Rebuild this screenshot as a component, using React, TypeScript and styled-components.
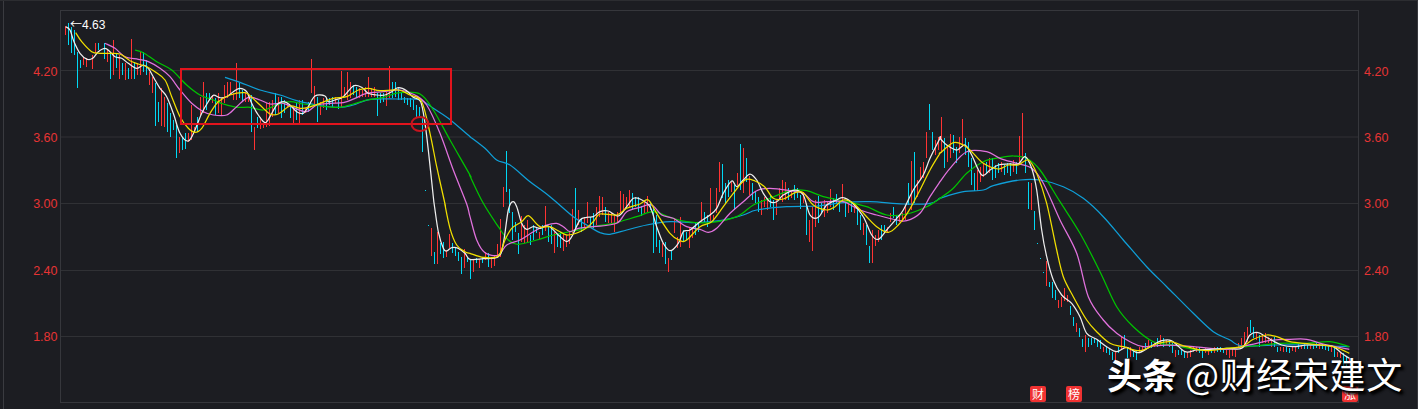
import React from "react";
import styled, { createGlobalStyle } from "styled-components";

// traces read off the chart, in 3x crop coordinates: [crop left, crop top, points]
type Panel = [number, number, string];

const WHITE: Panel[] = [
  [0, 0, "197,80 210,90 222,125 240,160 262,178 278,175 295,155 315,145 330,155 345,170 365,175 385,190 410,205 430,195 445,205 465,240 480,265 500,290 520,340 540,400 565,423 585,390 605,340 625,305 640,286 660,293 680,290 700,275 720,265 740,275 755,310 775,345 795,368 810,350 830,315 850,305 870,315 890,335 910,340 925,320 945,288 975,288 985,305 1005,300 1030,290 1060,258 1085,262 1105,280 1130,285 1155,285 1175,275 1195,263 1220,272 1240,292 1262,305 1275,370 1285,450 1300,590"],
  [0, 205, "1303,0 1315,80 1330,130 1340,138 1355,128 1375,130 1395,145"],
  [470, 100, "0,478 40,476 85,470 100,430 115,330 128,305 140,320 155,370 170,388 190,380 210,385 235,378 265,405 290,425 305,410 330,360 350,352 370,350 390,335 415,333 445,348 470,320 490,295 510,297 540,320 560,380 580,430 600,452 625,430 640,395 660,390 690,365 720,345 740,325 760,280 785,243 800,260 820,240 840,222 860,240 880,280 900,305 920,305 940,285 975,270 1000,285 1020,345 1045,352 1070,315 1100,300 1120,293 1150,312 1180,350 1205,405 1225,418 1250,390 1280,355 1300,330 1330,270 1360,225 1380,175 1410,115"],
  [940, 90, "0,145 20,165 50,180 75,165 95,195 125,255 150,240 175,225 205,222 235,222 255,200 275,235 290,300 305,420 320,500 340,570 365,615 395,640 420,680 440,730 470,748 500,770 530,785 560,772 595,788 630,770 665,752 695,752 735,785 770,780 810,778 860,775 905,775 930,735 955,728 985,745 1025,765 1060,770 1100,765 1140,765 1180,770 1205,790 1228,805"],
];

const YELLOW: Panel[] = [
  [0, 0, "227,98 245,125 275,155 300,160 330,160 360,162 390,182 415,192 440,200 465,215 495,240 515,290 540,350 565,385 585,397 605,385 630,340 655,305 690,285 735,278 755,292 780,315 810,342 835,342 870,318 900,325 925,322 960,310 1000,295 1040,290 1075,270 1105,265 1140,272 1195,270 1230,285 1265,305 1290,400 1310,500 1335,612"],
  [0, 205, "1335,0 1350,70 1370,120 1395,140"],
  [470, 100, "0,460 40,472 85,468 105,420 125,385 155,365 175,347 200,372 215,382 240,380 270,395 295,405 340,390 370,365 390,342 440,345 470,325 510,312 535,300 560,340 600,400 630,422 650,420 690,380 725,365 760,320 790,280 825,240 855,243 885,262 910,295 940,297 975,278 1000,278 1030,315 1070,330 1095,320 1120,300 1150,310 1185,345 1220,380 1255,397 1285,375 1315,335 1345,280 1380,210 1410,160"],
  [940, 90, "0,190 40,158 70,165 95,185 130,220 175,237 205,225 235,225 265,210 290,250 320,340 350,480 370,560 400,620 440,690 470,725 510,760 550,770 600,782 650,762 690,755 740,770 800,782 860,775 905,770 940,748 980,735 1010,740 1050,755 1110,762 1180,770 1228,790"],
];

const PINK: Panel[] = [
  [0, 0, "315,130 345,145 375,170 415,178 445,185 480,205 510,230 540,270 575,310 610,335 640,345 680,345 710,320 745,292 780,300 810,312 850,310 885,325 920,335 950,315 990,310 1030,308 1065,295 1100,280 1150,275 1200,270 1245,285 1280,315 1320,400 1360,510 1400,612"],
  [470, 100, "0,350 20,420 45,458 85,465 110,435 150,420 190,395 230,375 260,370 280,380 300,395 325,385 370,380 440,370 470,335 510,322 545,315 575,345 610,355 650,380 690,388 715,397 740,385 780,340 820,305 860,272 900,265 960,272 1000,280 1030,305 1070,305 1120,305 1170,330 1220,345 1280,360 1310,362 1350,340 1380,290 1410,245"],
  [940, 90, "0,275 30,235 80,185 140,185 180,205 230,220 275,235 310,280 360,390 410,490 445,620 490,690 530,730 570,755 610,770 680,765 760,770 860,778 905,770 950,760 1000,750 1050,748 1100,748 1150,762 1228,778"],
];

const GREEN: Panel[] = [
  [0, 0, "405,150 430,158 470,185 515,210 560,255 600,285 640,300 670,312 710,322 750,322 790,330 830,315 870,305 910,312 960,318 1020,322 1060,312 1100,300 1150,292 1200,278 1260,282 1300,330 1350,420 1410,525"],
  [470, 100, "0,228 40,310 85,380 115,420 145,433 200,420 250,405 300,395 380,378 430,370 500,350 550,335 600,352 650,365 720,368 800,350 850,315 900,295 960,272 1010,272 1060,290 1130,305 1190,320 1250,345 1310,342 1370,320 1410,295"],
  [940, 90, "0,325 40,295 80,250 130,215 180,203 220,198 260,205 300,240 360,335 420,430 480,545 530,650 580,710 640,755 700,765 780,780 860,775 940,768 1020,760 1100,760 1170,755 1228,770"],
];

const BLUE: Panel[] = [
  [0, 0, "675,232 720,247 780,270 840,285 890,302 950,315 1020,322 1060,315 1110,298 1190,297 1260,300 1300,325 1345,355 1410,410"],
  [470, 100, "0,110 45,145 80,180 120,195 180,245 240,290 310,350 350,375 390,398 420,403 470,390 530,375 600,365 680,368 750,362 820,345 860,330 950,320 1040,318 1120,308 1200,305 1300,312 1380,310 1410,295"],
  [940, 90, "0,325 60,307 130,300 160,287 240,270 300,270 370,290 430,325 490,380 550,450 620,530 680,590 760,670 820,725 870,750 905,768 1000,765 1100,765 1228,770"],
];

// candles: x,top,bottom,colour (r red, c cyan)
const CANDLES: Panel[] = [
  [0, 0, "195,78,105,r 205,70,135,c 214,80,160,c 223,90,165,c 232,155,263,c 241,180,205,c 250,170,195,r 259,175,200,r 277,165,207,r 286,130,160,r 295,128,150,c 313,130,177,c 322,150,185,r 331,155,237,c 340,120,225,r 349,160,205,c 358,165,237,r 367,190,225,c 376,190,240,r 385,205,237,c 394,118,237,r 403,185,238,c 412,190,225,r 421,155,225,r 430,155,215,c 439,180,225,c 448,215,255,r 457,230,280,r 466,250,378,c 475,305,365,c 484,265,378,r 493,290,380,r 502,310,395,c 511,340,410,c 520,360,390,c 529,375,473,c 538,410,458,r 547,410,450,c 556,400,448,c 565,400,425,r 574,315,420,r 583,380,400,r 592,350,395,c 601,290,345,r 610,245,340,r 619,280,330,c 628,280,300,c 637,285,310,r 646,295,345,c 655,280,340,r 664,295,345,r 673,255,310,r 682,245,295,r 691,245,285,r 700,280,300,r 709,190,300,r 718,250,295,c 727,270,305,c 736,280,305,r 745,285,305,r 754,285,397,c 763,380,450,r 772,350,385,c 781,350,387,r 790,370,385,r 799,310,380,r 808,305,378,r 817,300,350,r 826,280,345,c 835,290,340,r 844,290,355,c 853,300,340,c 862,310,325,r 871,320,355,c 880,325,370,r 889,310,360,c 898,300,370,r 907,300,345,c 916,325,340,r 925,305,335,c 934,178,280,r 943,258,315,r 952,290,365,c 961,305,345,r 970,295,325,r 979,295,330,c 988,295,315,c 997,290,320,c 1006,290,310,r 1015,300,328,c 1024,213,320,r 1033,262,285,r 1042,215,300,r 1051,245,295,r 1060,255,285,c 1069,260,295,c 1078,265,295,r 1087,270,290,r 1096,262,290,r 1105,232,290,r 1114,265,290,r 1123,262,290,r 1132,280,348,c 1141,280,310,c 1150,280,305,c 1159,275,317,r 1168,198,295,r 1177,245,295,c 1186,245,290,c 1195,265,300,c 1204,280,300,c 1213,290,310,c 1222,295,315,c 1231,295,320,c 1240,300,330,c 1249,315,350,c 1258,320,350,c 1267,352,455,c 1276,570,573,c"],
  [0, 205, "1285,60,63,c 1294,70,153,r 1303,140,177,c 1312,80,177,r 1321,115,147,c 1330,112,158,c 1339,135,155,r 1348,88,130,r 1357,115,143,c 1366,125,153,c 1375,140,167,c 1384,155,207,c 1393,132,188,r 1402,155,170,c"],
  [470, 100, "1,478,537,c 10,478,515,r 19,475,490,c 28,478,505,r 37,470,490,c 46,455,480,r 55,460,500,c 64,470,503,r 73,465,498,r 82,432,475,r 91,358,470,r 100,262,320,r 109,153,275,c 118,267,340,c 127,335,420,c 136,365,395,c 145,400,462,c 154,347,425,r 163,375,430,r 172,360,430,r 181,405,435,c 190,375,420,c 199,380,400,c 208,395,418,r 217,375,405,c 226,318,392,r 235,380,425,c 244,375,432,c 253,395,458,r 262,405,440,c 271,395,445,c 280,400,452,r 289,405,440,r 298,395,432,r 307,328,400,r 316,265,385,c 325,330,375,r 334,355,395,c 343,350,385,r 352,305,370,r 361,350,385,c 370,340,385,c 379,320,375,r 388,287,350,r 397,290,345,r 406,320,365,c 415,335,370,r 424,340,375,r 433,345,395,r 442,335,370,r 451,272,340,r 460,282,335,r 469,290,325,r 478,270,322,r 487,278,330,c 496,290,320,c 505,290,335,c 514,318,348,c 523,300,340,r 532,288,335,r 541,308,330,c 550,325,458,c 559,345,440,c 568,420,460,c 577,430,472,r 586,425,493,c 595,475,515,r 604,450,480,c 613,355,400,r 622,410,445,r 631,350,440,r 640,390,425,c 649,395,420,c 658,380,445,r 667,385,415,r 676,365,405,c 685,365,395,c 694,305,370,r 703,335,365,c 712,345,380,c 721,265,370,r 730,345,365,r 739,265,340,r 748,185,275,r 757,193,295,c 766,250,310,c 775,240,290,c 784,245,275,r 793,255,330,c 802,218,255,r 811,132,270,c 820,143,278,r 829,175,245,c 838,228,285,r 847,250,300,c 856,275,310,c 865,290,335,c 874,300,345,r 883,290,320,r 892,295,330,r 901,285,320,c 910,300,360,c 919,300,345,r 928,265,295,r 937,240,305,r 946,245,300,r 955,265,300,c 964,270,295,r 973,255,300,c 982,265,295,c 991,285,327,c 1000,275,310,r 1009,320,405,c 1018,360,425,r 1027,320,453,r 1036,300,380,r 1045,288,370,c 1054,310,340,c 1063,300,350,r 1072,305,340,r 1081,268,320,r 1090,295,330,c 1099,283,310,c 1108,310,335,c 1117,252,305,r 1126,305,350,c 1135,310,340,r 1144,310,335,c 1153,315,340,r 1162,320,375,c 1171,345,390,c 1180,370,405,r 1189,375,435,c 1198,437,488,c 1207,390,488,r 1216,405,437,r 1225,390,425,r 1234,375,420,c 1243,375,400,c 1252,380,395,r 1261,340,365,r 1270,320,355,c 1279,345,375,c 1288,345,365,r 1297,340,365,r 1306,318,360,r 1315,248,315,c 1324,183,330,r 1333,157,310,c 1342,240,290,r 1351,200,240,r 1360,185,235,r 1369,95,175,r 1378,12,90,c 1387,97,150,c 1396,120,165,r 1405,110,150,r"],
  [940, 90, "4,82,190,r 13,145,235,c 22,165,215,r 31,132,205,r 40,135,190,c 49,170,218,c 58,140,190,r 67,88,170,r 76,145,195,c 85,155,230,c 94,205,285,c 103,250,303,c 112,240,302,r 121,230,275,r 130,220,260,r 139,215,250,c 148,205,250,r 157,205,270,c 166,225,265,c 175,220,250,c 184,215,245,r 193,225,255,c 202,220,250,c 211,220,258,c 220,210,245,r 229,215,252,c 238,138,225,r 247,70,210,r 256,190,250,c 265,275,358,c 274,280,360,r 283,362,420,c 292,459,462,c 301,505,508,c 310,546,549,c 319,513,588,r 328,575,590,c 337,575,625,c 346,600,630,c 355,630,655,r 364,620,650,r 373,595,632,r 382,615,635,r 391,648,675,c 400,680,708,c 409,700,725,r 418,715,742,c 427,748,772,c 436,735,785,r 445,745,770,c 454,745,765,c 463,745,760,c 472,750,770,c 481,750,778,c 490,770,785,r 499,770,790,c 508,775,795,c 517,785,810,c 526,785,810,r 535,770,790,c 544,740,780,r 553,735,770,c 562,775,805,c 571,770,800,r 580,780,800,c 589,780,810,c 598,770,790,r 607,770,785,r 616,760,780,c 625,750,775,r 634,755,775,c 643,755,770,r 652,745,770,c 661,735,765,r 670,745,770,c 679,750,765,r 688,750,770,c 697,760,790,c 706,780,800,r 715,780,795,c 724,780,795,c 733,785,805,c 742,785,805,r 751,780,800,r 760,770,785,r 769,770,785,r 778,772,790,c 787,780,805,c 796,775,790,r 805,780,795,r 814,775,790,c 823,772,788,r 832,772,785,c 841,770,785,c 850,775,790,c 859,775,795,r 868,780,805,r 877,778,798,r 886,780,800,r 895,760,775,r 904,745,775,r 913,725,770,r 922,710,755,r 931,690,730,c 940,710,745,c 949,730,750,r 958,735,770,c 967,735,760,r 976,730,760,r 985,740,760,r 994,745,770,r 1003,740,770,c 1012,770,785,c 1021,770,782,r 1030,770,785,r 1039,770,785,c 1048,775,788,c 1057,770,782,r 1066,770,785,r 1075,760,778,c 1084,765,778,r 1093,762,778,c 1102,765,778,c 1111,765,778,r 1120,762,776,c 1129,760,775,c 1138,762,778,r 1147,762,778,c 1156,765,780,c 1165,768,782,c 1174,770,785,r 1183,770,802,c 1192,785,800,r 1201,790,805,r 1210,790,830,c 1219,800,830,c 1228,805,830,r"],
];

const GRID_Y = [70.5, 137, 203.5, 270.5, 336.5];
const PRICES = ["4.20", "3.60", "3.00", "2.40", "1.80"];

const MA_LINES = [
  { panels: BLUE, color: "#0f9fd8" },
  { panels: GREEN, color: "#00c400" },
  { panels: PINK, color: "#e272de" },
  { panels: WHITE, color: "#eeeeee" },
  { panels: YELLOW, color: "#f2e000" },
];

const MARKERS = [
  { label: "财", left: 969 },
  { label: "榜", left: 1005 },
  { label: "涨", left: 1281 },
];

// catmull-rom through the traced points, in page coordinates
const tracePath = (panels: Panel[]) => {
  const pts = panels.flatMap(([ox, oy, raw]) =>
    raw.split(" ").map((p) => {
      const [x, y] = p.split(",").map(Number);
      return [ox + x / 3, oy + y / 3];
    })
  );
  let d = `M${pts[0][0].toFixed(1)} ${pts[0][1].toFixed(1)}`;
  for (let i = 0; i < pts.length - 1; i++) {
    const p0 = pts[Math.max(i - 1, 0)];
    const p1 = pts[i];
    const p2 = pts[i + 1];
    const p3 = pts[Math.min(i + 2, pts.length - 1)];
    const c1x = p1[0] + (p2[0] - p0[0]) / 6;
    const c1y = p1[1] + (p2[1] - p0[1]) / 6;
    const c2x = p2[0] - (p3[0] - p1[0]) / 6;
    const c2y = p2[1] - (p3[1] - p1[1]) / 6;
    d += `C${c1x.toFixed(1)} ${c1y.toFixed(1)} ${c2x.toFixed(1)} ${c2y.toFixed(1)} ${p2[0].toFixed(1)} ${p2[1].toFixed(1)}`;
  }
  return d;
};

const candles = CANDLES.flatMap(([ox, oy, raw]) =>
  raw.split(" ").map((c) => {
    const [x, top, bottom, kind] = c.split(",");
    return {
      x: Math.floor(ox + Number(x) / 3) + 0.5,
      top: Math.round(oy + Number(top) / 3),
      bottom: Math.round(oy + Number(bottom) / 3),
      color: kind === "r" ? "#ff3333" : "#00d8f4",
    };
  })
);

const App: React.FC = () => {
  return (
    <Screen>
      <GlobalStyle />
      <LeftAxis>
        {PRICES.map((price) => (
          <PriceLabel key={price}>{price}</PriceLabel>
        ))}
      </LeftAxis>
      <Plot>
        <ChartSvg viewBox="61 11 1297 391">
          {GRID_Y.map((y) => (
            <line key={y} x1={61} x2={1358} y1={y} y2={y} stroke="#303135" strokeWidth={1} />
          ))}
          <g shapeRendering="crispEdges">
            {candles.map((c, i) => (
              <line key={i} x1={c.x} x2={c.x} y1={c.top} y2={c.bottom} stroke={c.color} strokeWidth={1} />
            ))}
          </g>
          <g fill="none" strokeWidth={1.25} strokeLinejoin="round">
            {MA_LINES.map((line) => (
              <path key={line.color} d={tracePath(line.panels)} stroke={line.color} />
            ))}
          </g>
          <rect x={181} y={69} width={270} height={55} fill="none" stroke="#e2141d" strokeWidth={2} />
          <ellipse cx={420} cy={124} rx={8.5} ry={7} fill="none" stroke="#c8141e" strokeWidth={2} />
        </ChartSvg>
        <HighLabel>
          <Arrow>←</Arrow>4.63
        </HighLabel>
        {MARKERS.map((m) => (
          <Marker key={m.label} $left={m.left}>
            {m.label}
          </Marker>
        ))}
      </Plot>
      <RightAxis>
        {PRICES.map((price) => (
          <PriceLabel key={price}>{price}</PriceLabel>
        ))}
      </RightAxis>
      <Watermark>
        <Brand>头条</Brand> <Handle>@财经宋建文</Handle>
      </Watermark>
    </Screen>
  );
};

export default App;

// styles
const GlobalStyle = createGlobalStyle`
  html, body {
    margin: 0;
    padding: 0;
    background-color: #1c1d22;
  }
`;

const Screen = styled.div`
  position: relative;
  box-sizing: border-box;
  display: flex;
  width: 1418px;
  height: 409px;
  padding: 9px 0 6px 0;
  background-color: #1c1d22;
  border-top: 1px solid #2c2d31;
  border-right: 1px solid #36373c;
  font-family: "Liberation Sans", Arial, sans-serif;
  overflow: hidden;

  &::before {
    content: "";
    width: 1px;
    margin: -9px 0 -6px 3px;
    background-color: #3a3b40;
    flex: none;
  }
`;

const LeftAxis = styled.div`
  box-sizing: border-box;
  display: flex;
  flex-direction: column;
  align-items: flex-end;
  flex: none;
  width: 56px;
  padding: 28.5px 2.5px 0 0;
`;

const RightAxis = styled(LeftAxis)`
  width: 58px;
  align-items: flex-start;
  padding: 28.5px 0 0 5px;
`;

const PriceLabel = styled.div`
  display: flex;
  align-items: center;
  height: 66.4px;
  font-size: 12.5px;
  color: #e63434;
`;

const Plot = styled.div`
  position: relative;
  flex: none;
  width: 1297px;
  height: 391px;
  border: 1px solid #36373c;
`;

const ChartSvg = styled.svg`
  display: block;
  width: 100%;
  height: 100%;
`;

const HighLabel = styled.div`
  position: absolute;
  left: 9px;
  top: 6px;
  font-size: 12px;
  line-height: 14px;
  color: #ffffff;
`;

const Arrow = styled.span`
  font-family: "Noto Sans CJK SC", sans-serif;
`;

const Marker = styled.div<{ $left: number }>`
  position: absolute;
  left: ${(props) => props.$left}px;
  bottom: 0;
  display: flex;
  align-items: center;
  justify-content: center;
  width: 16px;
  height: 16px;
  border-radius: 2px;
  background-color: #f03232;
  color: #ffffff;
  font-family: "Noto Sans CJK SC", sans-serif;
  font-size: 12px;
  line-height: 16px;
`;

const Watermark = styled.div`
  position: absolute;
  left: 1107px;
  top: 350px;
  white-space: nowrap;
  font-family: "Noto Sans CJK SC", sans-serif;
  font-size: 36px;
  line-height: 44px;
  color: #ffffff;
  text-shadow: 1px 1px 1px #000000, 2px 2px 3px #000000, 3px 3px 3px #000000;
`;

const Brand = styled.span`
  font-size: 35px;
  font-weight: 700;
`;

const Handle = styled.span`
  letter-spacing: 0.6px;
`;
